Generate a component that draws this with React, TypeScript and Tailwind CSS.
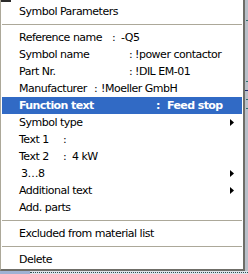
import React from "react"

const font = { fontFamily: '"DejaVu Sans", Tahoma, sans-serif' }

function Arrow() {
  return (
    <svg width="4" height="7" viewBox="0 0 4 7" className="ml-auto mr-[8px] shrink-0">
      <path d="M0 0 L4 3.5 L0 7 Z" fill="#000" />
    </svg>
  )
}

function Item({ children, active = false }: { children: React.ReactNode; active?: boolean }) {
  return (
    <div
      className={`flex h-[17px] items-center pl-[17px] text-[11px] leading-none whitespace-pre ${
        active ? "bg-[#316ac5] text-white font-bold tracking-[-0.6px]" : "text-black tracking-[-0.5px]"
      }`}
    >
      {children}
    </div>
  )
}

function Sep() {
  return (
    <div className="flex h-[9px] items-center">
      <div className="h-px w-full bg-[#aca899]" />
    </div>
  )
}

export default function App() {
  return (
    <div className="w-[248px] h-[274px] overflow-hidden bg-[#d4d8de] flex flex-col" style={font}>
      <div className="flex">
        <div className="w-[245px] h-[271px] bg-white border-l border-l-[#aca899] border-r-2 border-r-[#6f6e68] border-b-2 border-b-[#6f6e68] flex flex-col pt-[3px] pl-px pr-px">
          <div className="-ml-px -mt-[3px] mb-px w-[10px] h-[2px] bg-[#2b2b2b]" />
          <Item>Symbol Parameters</Item>
          <Sep />
          <Item>
            <span className="w-[93px] shrink-0">Reference name</span>
            <span className="w-[9px] shrink-0">:</span>
            <span>-Q5</span>
          </Item>
          <Item>
            <span className="w-[110px] shrink-0">Symbol name</span>
            <span className="w-[6px] shrink-0">:</span>
            <span>!power contactor</span>
          </Item>
          <Item>
            <span className="w-[110px] shrink-0">Part Nr.</span>
            <span className="w-[6px] shrink-0">:</span>
            <span>!DIL EM-01</span>
          </Item>
          <Item>
            <span className="w-[75px] shrink-0">Manufacturer</span>
            <span className="w-[7px] shrink-0">:</span>
            <span>!Moeller GmbH</span>
          </Item>
          <Item active>
            <span className="w-[137px] shrink-0">Function text</span>
            <span className="w-[11px] shrink-0">:</span>
            <span>Feed stop</span>
          </Item>
          <Item>
            <span>Symbol type</span>
            <Arrow />
          </Item>
          <Item>
            <span className="w-[44px] shrink-0">Text 1</span>
            <span>:</span>
          </Item>
          <Item>
            <span className="w-[44px] shrink-0">Text 2</span>
            <span className="w-[9px] shrink-0">:</span>
            <span>4 kW</span>
          </Item>
          <Item>
            <span className="pl-[2px]">3…8</span>
            <Arrow />
          </Item>
          <Item>
            <span>Additional text</span>
            <Arrow />
          </Item>
          <Item>Add. parts</Item>
          <Sep />
          <Item>Excluded from material list</Item>
          <Sep />
          <Item>Delete</Item>
        </div>
        <div className="flex-1 h-[271px] bg-[#b9c0c9] flex flex-col items-end">
          <div className="mt-[20px] w-[2px] h-px bg-[#2f6f6f]" />
          <div className="mt-[60px] w-[2px] h-px bg-[#2f6f6f]" />
          <div className="mt-[8px] w-[3px] h-px bg-[#1e2a6e]" />
          <div className="mt-[8px] w-[2px] h-px bg-[#2f6f6f]" />
          <div className="mt-[8px] w-[2px] h-px bg-[#2f6f6f]" />
        </div>
      </div>
      <div className="flex-1 flex items-end bg-[#dde3ea]">
        <div className="w-[30px] h-full bg-[#9fb2d4]" />
        <div className="flex-1 h-[1px] mb-[1px] border-t border-dotted border-[#2f5050]" />
      </div>
    </div>
  )
}
